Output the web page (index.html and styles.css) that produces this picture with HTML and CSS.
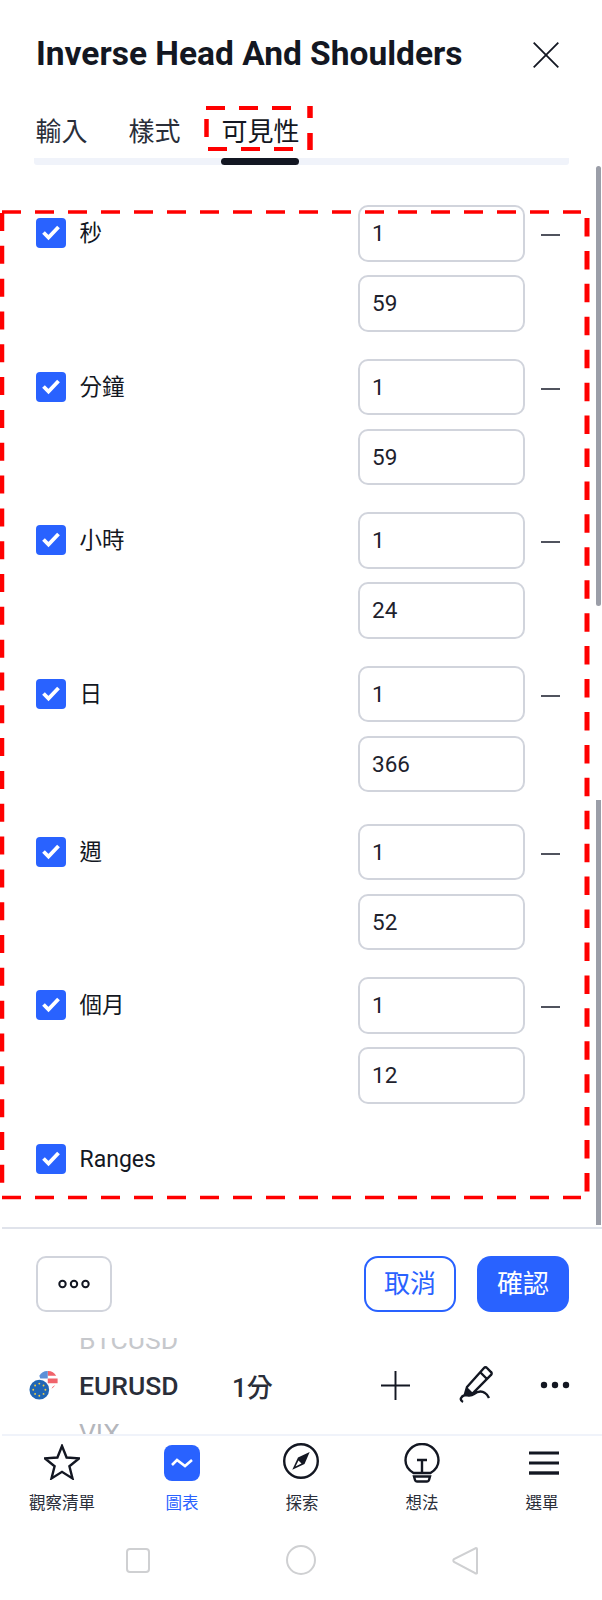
FILE: index.html
```html
<!DOCTYPE html>
<html lang="zh-Hant">
<head>
<meta charset="utf-8">
<title>Inverse Head And Shoulders</title>
<link rel="stylesheet" href="styles.css">
</head>
<body>
<div class="screen">
  <header class="head">
    <h1 class="title">Inverse Head And Shoulders</h1>
    <svg class="close" viewBox="0 0 26 26"><path d="M.7.7 25.300 25.300M25.300.7.7 25.300"/></svg>
  </header>
  <nav class="tabs">
    <span class="tab">輸入</span>
    <span class="tab">樣式</span>
    <span class="tab tab-on">可見性</span>
  </nav>
  <main class="body">
    <section class="row"><label class="check"><i class="box"><svg viewBox="0 0 30 30"><path d="M7.500 14.500 12.500 19.500 22.500 9"/></svg></i>秒</label><div class="pair"><div class="field">1</div><b class="dash"></b><div class="field">59</div></div></section>
    <section class="row"><label class="check"><i class="box"><svg viewBox="0 0 30 30"><path d="M7.500 14.500 12.500 19.500 22.500 9"/></svg></i>分鐘</label><div class="pair"><div class="field">1</div><b class="dash"></b><div class="field">59</div></div></section>
    <section class="row"><label class="check"><i class="box"><svg viewBox="0 0 30 30"><path d="M7.500 14.500 12.500 19.500 22.500 9"/></svg></i>小時</label><div class="pair"><div class="field">1</div><b class="dash"></b><div class="field">24</div></div></section>
    <section class="row row-wide"><label class="check"><i class="box"><svg viewBox="0 0 30 30"><path d="M7.500 14.500 12.500 19.500 22.500 9"/></svg></i>日</label><div class="pair"><div class="field">1</div><b class="dash"></b><div class="field">366</div></div></section>
    <section class="row"><label class="check"><i class="box"><svg viewBox="0 0 30 30"><path d="M7.500 14.500 12.500 19.500 22.500 9"/></svg></i>週</label><div class="pair"><div class="field">1</div><b class="dash"></b><div class="field">52</div></div></section>
    <section class="row"><label class="check"><i class="box"><svg viewBox="0 0 30 30"><path d="M7.500 14.500 12.500 19.500 22.500 9"/></svg></i>個月</label><div class="pair"><div class="field">1</div><b class="dash"></b><div class="field">12</div></div></section>
    <section class="row-last"><label class="check"><i class="box"><svg viewBox="0 0 30 30"><path d="M7.500 14.500 12.500 19.500 22.500 9"/></svg></i><span class="latin">Ranges</span></label></section>
  </main>
  <footer class="actions">
    <button class="more"><svg viewBox="0 0 32 10"><circle cx="4.500" cy="5" r="3.200"/><circle cx="16" cy="5" r="3.200"/><circle cx="27.500" cy="5" r="3.200"/></svg></button>
    <span class="grow"></span>
    <button class="btn btn-line">取消</button>
    <button class="btn btn-fill">確認</button>
  </footer>
  <div class="symbols">
    <div class="ghost ghost-top"><span>BTCUSD</span></div>
    <div class="sym">
      <svg class="flag" viewBox="0 0 32 32">
        <circle cx="20" cy="11" r="10" fill="#fff"/>
        <path d="M20 1a10 10 0 0 1 9 5H20zM20 9h10.500v5H20zM25 18l3-2a10 10 0 0 1-4 4z" fill="#f0636b"/>
        <path d="M11 6a10 10 0 0 1 9-5v8h-8z" fill="#5c90d8"/>
        <circle cx="11" cy="21" r="10.500" fill="#1f66b5"/>
        <g fill="#f2cf45"><circle cx="11" cy="14.500" r="1"/><circle cx="15.500" cy="16.500" r="1"/><circle cx="17.500" cy="21" r="1"/><circle cx="15.500" cy="25.500" r="1"/><circle cx="11" cy="27.500" r="1"/><circle cx="6.500" cy="25.500" r="1"/><circle cx="4.500" cy="21" r="1"/><circle cx="6.500" cy="16.500" r="1"/></g>
      </svg>
      <strong class="sym-name">EURUSD</strong>
      <span class="sym-int">1分</span>
      <span class="grow"></span>
      <svg class="tool tool-plus" viewBox="0 0 30 30"><path d="M15 0V30M0 15H30"/></svg>
      <svg class="tool tool-pen" viewBox="0 0 34 38"><path d="M8 21 25 2a2 2 0 0 1 3 0l4 4a2 2 0 0 1 0 3L14 27l-8 1zM21 6l7 7M4 36c-4-2-2-6 2-7 3 0 5 2 9-1 4-3 8-3 11-1 2 1 3 3 4 5"/><path class="pen-tip" d="M8 21 14 27 6 28Z"/></svg>
      <svg class="tool tool-dots" viewBox="0 0 30 8"><circle cx="4" cy="4" r="3.200"/><circle cx="15" cy="4" r="3.200"/><circle cx="26" cy="4" r="3.200"/></svg>
    </div>
    <div class="ghost ghost-bot"><span>VIX</span></div>
  </div>
  <nav class="tabbar">
    <div class="item"><svg class="ico ico-star" viewBox="0 0 36 36"><path d="M18 2 22.600 13.500 35 14.400 25.400 22.300 28.500 34.400 18 27.800 7.500 34.400 10.600 22.300 1 14.400 13.400 13.500Z"/></svg><span>觀察清單</span></div>
    <div class="item item-on"><svg class="ico ico-chart" viewBox="0 0 36 36"><rect width="36" height="36" rx="8" fill="#2962ff" stroke="none"/><path d="M8 20 13 15 21 21 28 15" stroke="#fff" stroke-width="2.600"/></svg><span>圖表</span></div>
    <div class="item"><svg class="ico ico-compass" viewBox="0 0 36 36"><circle cx="18" cy="18" r="16.800"/><path d="M26.700 9 15 14.500 9.300 26.700 21.500 21Z" fill="#131722" stroke="none"/><path d="M12.500 23.500 15.500 17.500 18.500 20.500Z" fill="#fff" stroke="none"/></svg><span>探索</span></div>
    <div class="item"><svg class="ico ico-bulb" viewBox="0 0 36 40"><path d="M9.500 30C4.500 27 1.500 22.500 1.500 17.500a16.500 16.500 0 0 1 33 0C34.500 22.500 31.500 27 26.500 30ZM13 17H23M18 17V30M10 33.500H26L25 37a2 2 0 0 1-2 1.500H13a2 2 0 0 1-2-1.500Z"/></svg><span>想法</span></div>
    <div class="item"><svg class="ico ico-menu" viewBox="0 0 30 24"><path d="M0 2H30M0 12H30"/><path class="menu-low" d="M0 22H30"/></svg><span>選單</span></div>
  </nav>
  <div class="sysbar">
    <svg class="sys sys-sq" viewBox="0 0 24 25"><rect x="1" y="1" width="22" height="23" rx="3"/></svg>
    <svg class="sys sys-ci" viewBox="0 0 30 30"><circle cx="15" cy="15" r="14"/></svg>
    <svg class="sys sys-tr" viewBox="0 0 26 29"><path d="M24 2a1 1 0 0 1 1 1V26a1 1 0 0 1-2 1L2 16a2 2 0 0 1 0-3Z"/></svg>
  </div>
  <div class="thumb thumb-a"></div>
  <div class="thumb thumb-b"></div>
  <svg class="marks" viewBox="0 0 602 1600" aria-hidden="true">
    <path class="mark-h" d="M2 212H581M2 1197.500H581"/>
    <path class="mark-r" d="M587 218V1197"/>
    <path class="mark-l" d="M2 213V1197"/>
    <path class="mark-tab" d="M206 108H291M208 149H293"/>
    <path class="mark-tab-r" d="M310 106V118M310 133V150"/>
    <path class="mark-tab-l" d="M206.500 119V137"/>
  </svg>
</div>
</body>
</html>
```
FILE: styles.css
```css
* { box-sizing: border-box; }
html, body { margin: 0; padding: 0; background: #fff; }
body { font-family: Roboto, "Noto Sans CJK TC", sans-serif; color: #131722; }
.screen { position: relative; width: 602px; height: 1600px; overflow: hidden; display: flex; flex-direction: column; }
.grow { flex: 1; }

.head { display: flex; align-items: center; justify-content: space-between; height: 38px; margin-top: 35px; padding: 0 43px 0 36px; }
.title { margin: 0; font-size: 33.500px; font-weight: 700; line-height: 38px; white-space: nowrap; }
.close { width: 26px; height: 26px; margin-top: 2px; fill: none; stroke: #131722; stroke-width: 1.800; }

.tabs { display: flex; height: 51px; margin: 41px 33px 0 34px; border-bottom: 7px solid #f0f3fa; border-radius: 3px; gap: 41px; padding-left: 1.500px; }
.tab { position: relative; font-size: 26px; line-height: 32px; height: 44px; padding-top: 2px; color: #2a2e39; }
.tab-on { color: #131722; }
.tab-on::after { content: ""; position: absolute; left: -1px; right: 1px; bottom: -7px; height: 7px; background: #131722; border-radius: 4px; }

.body { display: flex; flex-direction: column; height: 1064px; margin-left: 2px; padding-top: 40px; border-bottom: 2px solid #e0e3eb; }
.row { display: flex; justify-content: space-between; height: 153.500px; padding-left: 34px; }
.row-wide { height: 158px; }
.row-last { padding-left: 34px; }
.check { display: flex; align-items: flex-start; gap: 13.500px; font-size: 22.500px; line-height: 31px; height: 30px; color: #131722; margin-top: 13px; }
.latin { font-size: 23px; }
.box { display: block; width: 30px; height: 30px; background: #2962ff; border-radius: 4px; flex: none; }
.box svg { display: block; width: 30px; height: 30px; fill: none; stroke: #fff; stroke-width: 3.800; }
.pair { position: relative; width: 244px; padding-right: 77px; display: flex; flex-direction: column; gap: 13.500px; }
.field { height: 56.500px; border: 2px solid #d1d4dc; border-radius: 10px; font-size: 22.500px; line-height: 52px; padding-left: 12px; color: #1e222d; }
.dash { position: absolute; right: 42px; top: 29px; width: 19px; height: 2px; background: #50535e; }

.actions { display: flex; align-items: stretch; gap: 21px; height: 56px; margin-top: 27px; padding: 0 33px 0 36px; }
.more { width: 76px; padding: 0; background: #fff; border: 2px solid #d1d4dc; border-radius: 10px; display: flex; align-items: center; justify-content: center; }
.more svg { width: 32px; height: 10px; fill: none; stroke: #131722; stroke-width: 2; }
.btn { width: 92px; padding: 0; border-radius: 14px; font-family: inherit; font-size: 26px; line-height: 1; }
.btn-line { background: #fff; border: 2px solid #2962ff; color: #2962ff; }
.btn-fill { background: #2962ff; border: 0; color: #fff; }

.symbols { height: 122px; display: flex; flex-direction: column; }
.ghost { display: flex; height: 11px; overflow: hidden; padding-left: 79px; font-size: 26.500px; font-weight: 400; color: #c6c8cc; }
.ghost span { display: block; line-height: 1; }
.ghost-top { margin-top: 26px; align-items: flex-end; }
.ghost-top span { margin-bottom: -4px; }
.ghost-bot { align-items: flex-start; color: #b4b6bc; }
.ghost-bot span { margin-top: -3px; }
.sym { display: flex; align-items: center; height: 74px; padding: 0 32px 2px 29px; }
.flag { width: 30px; height: 30px; flex: none; }
.sym-name { margin-left: 20px; font-size: 26.500px; font-weight: 500; width: 153px; color: #2a2e39; }
.sym-int { font-size: 26px; font-weight: 500; color: #2a2e39; }
.tool { fill: none; stroke: #131722; flex: none; }
.tool-plus { width: 29px; height: 29px; stroke-width: 2; margin-right: 49px; }
.tool-pen { width: 34px; height: 38px; stroke-width: 2.400; margin-right: 47px; }
.pen-tip { fill: #131722; stroke: none; }
.tool-dots { width: 30px; height: 8px; fill: #131722; stroke: none; }

.tabbar { display: flex; height: 109px; border-top: 2px solid #f0f3fa; margin-left: 2px; }
.item { width: 120px; display: grid; grid-template-rows: 57px auto; justify-items: center; align-items: start; font-size: 16.500px; line-height: 22px; color: #2a2e39; }
.item-on { color: #2962ff; }
.ico { width: 36px; height: 36px; fill: none; stroke: #131722; stroke-width: 2.400; }
.ico-star { margin-top: 8px; }
.ico-chart { margin-top: 9px; }
.ico-compass { margin: 7px 2px 0 0; }
.ico-bulb { height: 40px; margin: 7px 1px 0 0; }
.ico-menu { width: 30px; height: 24px; margin: 15px 0 0 3px; stroke-width: 3; }
.menu-low { stroke-width: 3.400; }

.sysbar { display: flex; align-items: center; gap: 136px; height: 34px; padding-left: 126px; }
.sys { fill: none; stroke: #cfd0d2; stroke-width: 2; flex: none; }
.sys-sq { width: 24px; height: 25px; }
.sys-ci { width: 30px; height: 30px; }
.sys-tr { width: 26px; height: 29px; }

.thumb { position: absolute; left: 595.500px; width: 5px; background: #9b9ea8; }
.thumb-a { top: 166px; height: 440px; border-radius: 3px; }
.thumb-b { top: 800px; height: 425px; }

.marks { position: absolute; left: 0; top: 0; width: 602px; height: 1600px; fill: none; stroke: #ff0000; }
.mark-h { stroke-width: 3.500; stroke-dasharray: 19 14; }
.mark-r { stroke-width: 5; stroke-dasharray: 18.500 14.430; }
.mark-l { stroke-width: 4.500; stroke-dasharray: 18 14.820; }
.mark-tab { stroke-width: 3.800; stroke-dasharray: 19 14; }
.mark-tab-r { stroke-width: 5.500; }
.mark-tab-l { stroke-width: 4.500; }
```
